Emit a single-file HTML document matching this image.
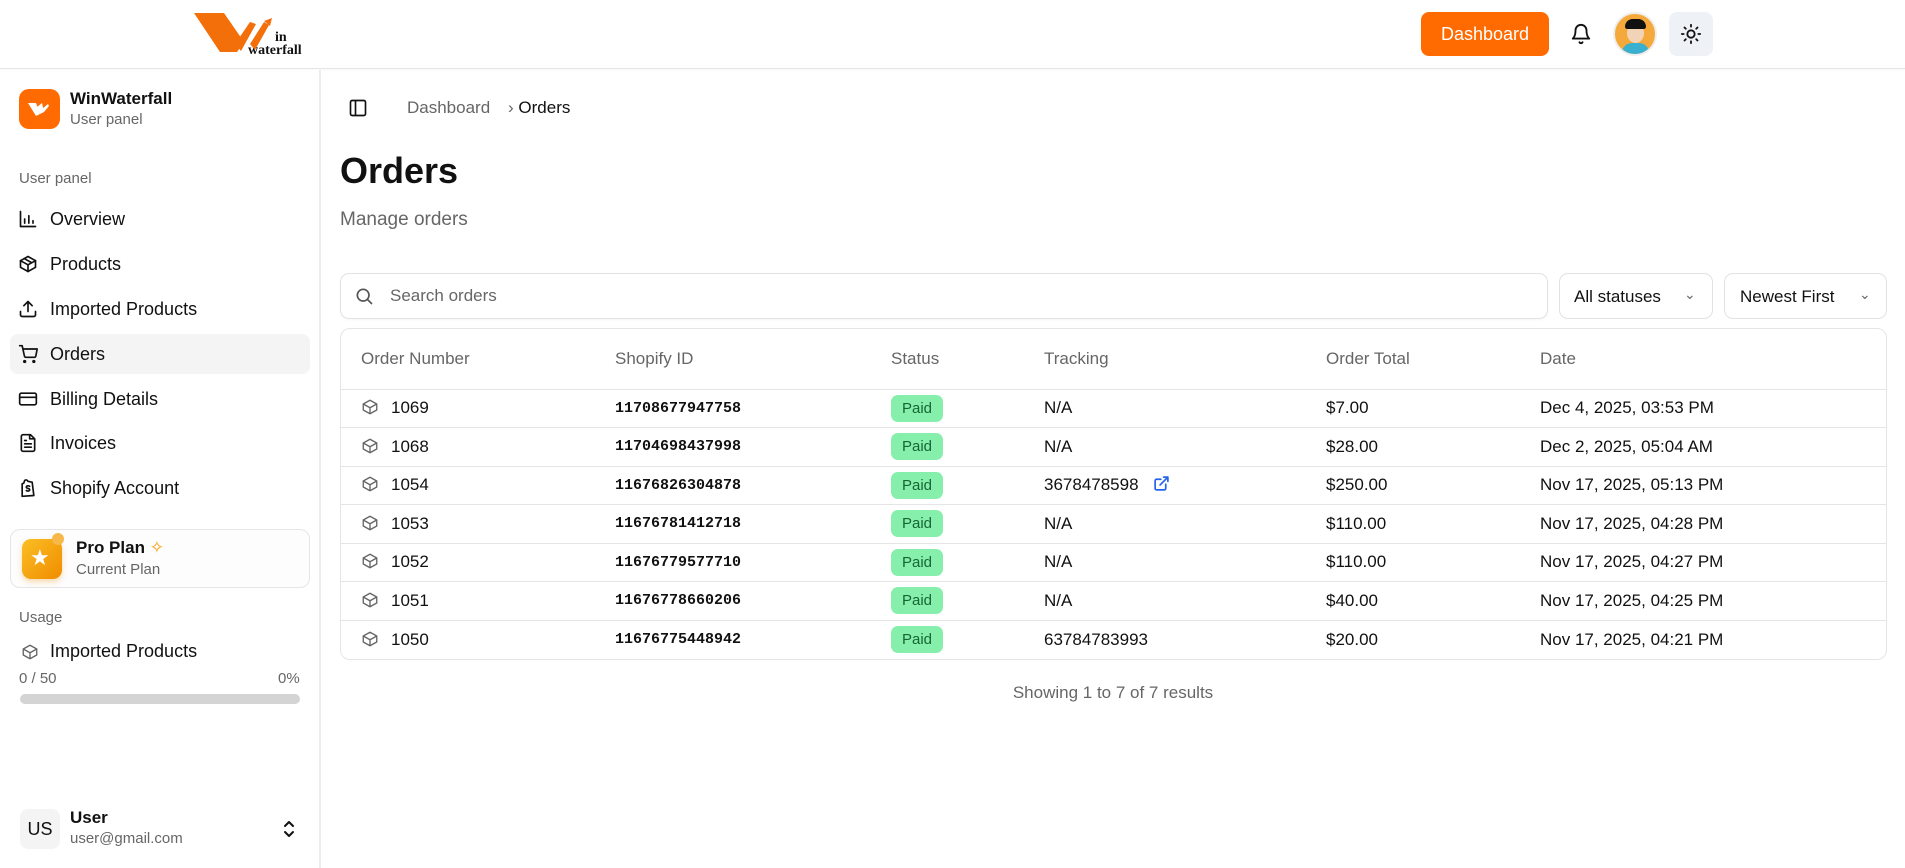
<!DOCTYPE html>
<html><head><meta charset="utf-8">
<style>
*{box-sizing:border-box;margin:0;padding:0}
body{width:1905px;height:868px;overflow:hidden;background:#fff;font-family:"Liberation Sans",sans-serif;color:#111;position:relative}
.a{position:absolute}
.hdr{left:0;top:0;width:1905px;height:69px;border-bottom:1px solid #e5e5e5;box-shadow:0 1px 3px rgba(0,0,0,.04)}
.side{left:0;top:70px;width:321px;height:798px;border-right:2px solid #ececec;background:#fff}
.nav{left:10px;width:300px;height:40px;border-radius:8px;display:flex;align-items:center;padding-left:8px;font-size:18px;color:#111}
.nav svg{width:20px;height:20px;margin-right:12px;stroke:#111;fill:none;stroke-width:2;stroke-linecap:round;stroke-linejoin:round}
.gray{color:#666}
table{border-collapse:collapse;width:100%}
.tbl{left:340px;top:328px;width:1547px;height:332px;border:1px solid #e5e5e5;border-radius:10px;overflow:hidden}
th{height:60px;text-align:left;font-weight:normal;color:#666;font-size:17px;border-bottom:1px solid #e5e5e5}
td{height:38.5px;font-size:17px;border-bottom:1px solid #e5e5e5;color:#111}
tr:last-child td{border-bottom:none}
.mono{font-family:"Liberation Mono",monospace;font-weight:bold;font-size:15px}
.paid{display:inline-block;background:#86efac;color:#166534;border-radius:7px;padding:0 11px;height:27px;line-height:27px;font-size:15px}
.box{width:18px;height:18px;vertical-align:-3px;margin-right:12px;stroke:#666;fill:none;stroke-width:1.8;stroke-linejoin:round}
</style></head><body>
<div class="a hdr"></div>
<!-- logo -->
<svg class="a" style="left:190px;top:8px" width="120" height="52" viewBox="0 0 120 52">
<polygon points="4,5 34,5 54,34 47,44 30,44" fill="#f36f0a"/>
<polygon points="45,36 60,14 66,16 51,43" fill="#f36f0a"/>
<polygon points="60,36 74,14 79,17 65,42" fill="#f36f0a"/>
<polygon points="74,13 82,10 80,18" fill="#f36f0a"/>
<text x="85" y="33" font-family="Liberation Serif" font-weight="bold" font-size="14" fill="#111">in</text>
<text x="58" y="46" font-family="Liberation Serif" font-weight="bold" font-size="14" fill="#111">waterfall</text>
</svg>
<div class="a" style="left:1421px;top:12px;width:128px;height:44px;background:#ff6b00;border-radius:8px;color:#fff;font-size:18px;display:flex;align-items:center;justify-content:center">Dashboard</div>
<svg class="a" style="left:1570px;top:23px" width="22" height="22" viewBox="0 0 24 24" fill="none" stroke="#111" stroke-width="2" stroke-linecap="round" stroke-linejoin="round"><path d="M6 8a6 6 0 0 1 12 0c0 7 3 9 3 9H3s3-2 3-9"/><path d="M10.3 21a1.94 1.94 0 0 0 3.4 0"/></svg>
<div class="a" style="left:1613px;top:12px;width:44px;height:44px;border-radius:50%;background:#f5a93a;border:2px solid #eee;overflow:hidden">
 <div class="a" style="left:12px;top:9px;width:17px;height:20px;border-radius:50%;background:#f3d3b5"></div>
 <div class="a" style="left:10px;top:5px;width:21px;height:10px;border-radius:10px 10px 3px 3px;background:#111"></div>
 <div class="a" style="left:7px;top:29px;width:27px;height:14px;border-radius:10px 10px 0 0;background:#3ab0d0"></div>
</div>
<div class="a" style="left:1669px;top:12px;width:44px;height:44px;border-radius:8px;background:#eef1f5"></div>
<svg class="a" style="left:1680px;top:23px" width="22" height="22" viewBox="0 0 24 24" fill="none" stroke="#111" stroke-width="2" stroke-linecap="round"><circle cx="12" cy="12" r="4"/><path d="M12 2v2M12 20v2M4.9 4.9l1.4 1.4M17.7 17.7l1.4 1.4M2 12h2M20 12h2M6.3 17.7l-1.4 1.4M19.1 4.9l-1.4 1.4"/></svg>

<div class="a side"></div>
<div class="a" style="left:19px;top:89px;width:41px;height:40px;border-radius:10px;background:#ff6b00"></div>
<svg class="a" style="left:28px;top:100px" width="24" height="18" viewBox="0 0 24 18"><polygon points="0,3 8,3 12,14 8,16" fill="#fff"/><polygon points="9,7 14,3 16,12 12,14" fill="#fff"/><polygon points="14,9 20,4 21,6 16,12" fill="#fff"/></svg>
<div class="a" style="left:70px;top:89px;font-size:17px;font-weight:bold">WinWaterfall</div>
<div class="a gray" style="left:70px;top:111px;font-size:15px">User panel</div>
<div class="a gray" style="left:19px;top:170px;font-size:15px">User panel</div>

<div class="a nav" style="top:199px"><svg viewBox="0 0 24 24"><path d="M3 3v18h18M8 17v-5M13 17V8M18 17v-3"/></svg>Overview</div>
<div class="a nav" style="top:244px"><svg viewBox="0 0 24 24"><path d="M21 8l-9-5-9 5v8l9 5 9-5z"/><path d="M3 8l9 5 9-5M12 13v8M7.5 5.5l9 5"/></svg>Products</div>
<div class="a nav" style="top:289px"><svg viewBox="0 0 24 24"><path d="M3 15v4a2 2 0 0 0 2 2h14a2 2 0 0 0 2-2v-4M17 8l-5-5-5 5M12 3v12"/></svg>Imported Products</div>
<div class="a nav" style="top:334px;background:#f4f4f5"><svg viewBox="0 0 24 24"><circle cx="8" cy="21" r="1"/><circle cx="19" cy="21" r="1"/><path d="M2 2h3l2.7 12.4a2 2 0 0 0 2 1.6h9.7a2 2 0 0 0 2-1.6L23 6H6"/></svg>Orders</div>
<div class="a nav" style="top:379px"><svg viewBox="0 0 24 24"><rect x="2" y="5" width="20" height="14" rx="2"/><path d="M2 10h20"/></svg>Billing Details</div>
<div class="a nav" style="top:423px"><svg viewBox="0 0 24 24"><path d="M15 2H6a2 2 0 0 0-2 2v16a2 2 0 0 0 2 2h12a2 2 0 0 0 2-2V7z"/><path d="M14 2v5h5M8 13h8M8 17h8M8 9h2"/></svg>Invoices</div>
<div class="a nav" style="top:468px"><svg viewBox="0 0 24 24"><path d="M5 7l2-1 1-3c1-1 3-1 4 1l5 1 2 16-14 1z"/><path d="M14 10c-1-1-4-1-4 1s4 1 4 3-3 2-4 1"/></svg>Shopify Account</div>

<div class="a" style="left:10px;top:529px;width:300px;height:59px;border:1px solid #e5e5e5;border-radius:10px;background:#fdfdfd"></div>
<div class="a" style="left:22px;top:539px;width:40px;height:40px;border-radius:9px;background:linear-gradient(135deg,#fbbf24,#f08c00);box-shadow:0 3px 6px rgba(240,140,0,.3)"></div>
<div class="a" style="left:52px;top:533px;width:12px;height:12px;border-radius:50%;background:#f7b84a"></div>
<div class="a" style="left:30px;top:544px;color:#fff;font-size:22px;line-height:28px">★</div>
<div class="a" style="left:76px;top:538px;font-size:17px;font-weight:bold">Pro Plan <span style="color:#f59e0b;font-weight:normal">✧</span></div>
<div class="a gray" style="left:76px;top:561px;font-size:15px">Current Plan</div>

<div class="a gray" style="left:19px;top:609px;font-size:15px">Usage</div>
<svg class="a box" style="left:21px;top:643px" viewBox="0 0 24 24"><path d="M21 8l-9-5-9 5v8l9 5 9-5z"/><path d="M3 8l9 5 9-5M12 13v8"/></svg>
<div class="a" style="left:50px;top:641px;font-size:18px">Imported Products</div>
<div class="a gray" style="left:19px;top:670px;font-size:15px">0 / 50</div>
<div class="a gray" style="left:278px;top:670px;font-size:15px">0%</div>
<div class="a" style="left:20px;top:694px;width:280px;height:10px;border-radius:5px;background:#d4d4d4"></div>

<div class="a" style="left:20px;top:809px;width:40px;height:40px;border-radius:8px;background:#f4f4f5;font-size:18px;display:flex;align-items:center;justify-content:center">US</div>
<div class="a" style="left:70px;top:808px;font-size:17px;font-weight:bold">User</div>
<div class="a gray" style="left:70px;top:830px;font-size:15px">user@gmail.com</div>
<svg class="a" style="left:280px;top:818px" width="18" height="22" viewBox="0 0 18 22" fill="none" stroke="#111" stroke-width="2" stroke-linecap="round" stroke-linejoin="round"><path d="M5 8l4-4 4 4M5 14l4 4 4-4"/></svg>

<!-- main -->
<svg class="a" style="left:348px;top:98px" width="20" height="20" viewBox="0 0 24 24" fill="none" stroke="#111" stroke-width="2"><rect x="3" y="3" width="18" height="18" rx="2"/><path d="M9 3v18"/></svg>
<div class="a gray" style="left:407px;top:98px;font-size:17px">Dashboard</div>
<div class="a" style="left:508px;top:98px;font-size:17px"><span class="gray">›</span>&nbsp;Orders</div>
<div class="a" style="left:340px;top:150px;font-size:36px;font-weight:bold">Orders</div>
<div class="a gray" style="left:340px;top:209px;font-size:19px">Manage orders</div>

<div class="a" style="left:340px;top:273px;width:1208px;height:46px;border:1px solid #e2e2e2;border-radius:9px;box-shadow:0 1px 2px rgba(0,0,0,.04)"></div>
<svg class="a" style="left:354px;top:286px" width="20" height="20" viewBox="0 0 24 24" fill="none" stroke="#555" stroke-width="2" stroke-linecap="round"><circle cx="11" cy="11" r="7"/><path d="M21 21l-5-5"/></svg>
<div class="a gray" style="left:390px;top:286px;font-size:17px">Search orders</div>
<div class="a" style="left:1559px;top:273px;width:154px;height:46px;border:1px solid #e2e2e2;border-radius:9px;font-size:17px;padding:13px 0 0 14px">All statuses<span class="a" style="left:124px;top:12px;color:#666;font-size:14px">⌄</span></div>
<div class="a" style="left:1724px;top:273px;width:163px;height:46px;border:1px solid #e2e2e2;border-radius:9px;font-size:17px;padding:13px 0 0 15px">Newest First<span class="a" style="left:134px;top:12px;color:#666;font-size:14px">⌄</span></div>

<div class="a tbl">
<table>
<colgroup><col style="width:274px"><col style="width:276px"><col style="width:153px"><col style="width:282px"><col style="width:214px"><col></colgroup>
<tr><th style="padding-left:20px">Order Number</th><th>Shopify ID</th><th>Status</th><th>Tracking</th><th>Order Total</th><th>Date</th></tr>
<tr><td style="padding-left:20px"><svg class="box" viewBox="0 0 24 24"><path d="M21 8l-9-5-9 5v8l9 5 9-5z"/><path d="M3 8l9 5 9-5M12 13v8"/></svg>1069</td><td class="mono">11708677947758</td><td><span class="paid">Paid</span></td><td>N/A</td><td>$7.00</td><td>Dec 4, 2025, 03:53 PM</td></tr>
<tr><td style="padding-left:20px"><svg class="box" viewBox="0 0 24 24"><path d="M21 8l-9-5-9 5v8l9 5 9-5z"/><path d="M3 8l9 5 9-5M12 13v8"/></svg>1068</td><td class="mono">11704698437998</td><td><span class="paid">Paid</span></td><td>N/A</td><td>$28.00</td><td>Dec 2, 2025, 05:04 AM</td></tr>
<tr><td style="padding-left:20px"><svg class="box" viewBox="0 0 24 24"><path d="M21 8l-9-5-9 5v8l9 5 9-5z"/><path d="M3 8l9 5 9-5M12 13v8"/></svg>1054</td><td class="mono">11676826304878</td><td><span class="paid">Paid</span></td><td>3678478598 <svg style="margin-left:10px;vertical-align:-2px" width="17" height="17" viewBox="0 0 24 24" fill="none" stroke="#2563eb" stroke-width="2.4" stroke-linecap="round" stroke-linejoin="round"><path d="M18 13v6a2 2 0 0 1-2 2H5a2 2 0 0 1-2-2V8a2 2 0 0 1 2-2h6M15 3h6v6M10 14L21 3"/></svg></td><td>$250.00</td><td>Nov 17, 2025, 05:13 PM</td></tr>
<tr><td style="padding-left:20px"><svg class="box" viewBox="0 0 24 24"><path d="M21 8l-9-5-9 5v8l9 5 9-5z"/><path d="M3 8l9 5 9-5M12 13v8"/></svg>1053</td><td class="mono">11676781412718</td><td><span class="paid">Paid</span></td><td>N/A</td><td>$110.00</td><td>Nov 17, 2025, 04:28 PM</td></tr>
<tr><td style="padding-left:20px"><svg class="box" viewBox="0 0 24 24"><path d="M21 8l-9-5-9 5v8l9 5 9-5z"/><path d="M3 8l9 5 9-5M12 13v8"/></svg>1052</td><td class="mono">11676779577710</td><td><span class="paid">Paid</span></td><td>N/A</td><td>$110.00</td><td>Nov 17, 2025, 04:27 PM</td></tr>
<tr><td style="padding-left:20px"><svg class="box" viewBox="0 0 24 24"><path d="M21 8l-9-5-9 5v8l9 5 9-5z"/><path d="M3 8l9 5 9-5M12 13v8"/></svg>1051</td><td class="mono">11676778660206</td><td><span class="paid">Paid</span></td><td>N/A</td><td>$40.00</td><td>Nov 17, 2025, 04:25 PM</td></tr>
<tr><td style="padding-left:20px"><svg class="box" viewBox="0 0 24 24"><path d="M21 8l-9-5-9 5v8l9 5 9-5z"/><path d="M3 8l9 5 9-5M12 13v8"/></svg>1050</td><td class="mono">11676775448942</td><td><span class="paid">Paid</span></td><td>63784783993</td><td>$20.00</td><td>Nov 17, 2025, 04:21 PM</td></tr>
</table>
</div>
<div class="a gray" style="left:940px;top:683px;width:346px;text-align:center;font-size:17px">Showing 1 to 7 of 7 results</div>
</body></html>
